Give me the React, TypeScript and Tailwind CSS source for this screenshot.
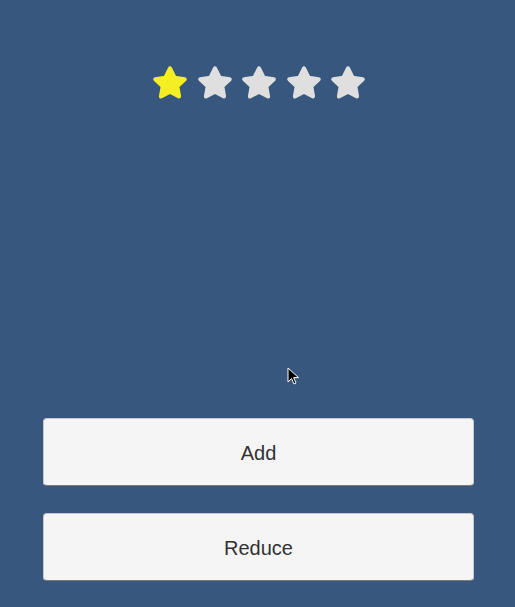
import React from "react";

function Star({ filled }: { filled: boolean }) {
  const color = filled ? "#f4ee23" : "#dfdfdf";
  return (
    <svg width="40" height="38" viewBox="0 0 24 24" className="block">
      <polygon
        points="12,2.8 14.9,8.7 21.3,9.6 16.6,14.1 17.7,20.5 12,17.5 6.3,20.5 7.4,14.1 2.7,9.6 9.1,8.7"
        fill={color}
        stroke={color}
        strokeWidth="2.6"
        strokeLinejoin="round"
      />
    </svg>
  );
}

export default function App() {
  const rating = 1;

  return (
    <div
      className="relative flex flex-col h-[607px] w-full bg-[#38577f] overflow-hidden"
      style={{ fontFamily: '"Liberation Sans", Arial, sans-serif' }}
    >
      <div className="flex justify-center gap-[4.5px] pt-[64px] pl-[3px]">
        {[0, 1, 2, 3, 4].map((i) => (
          <Star key={i} filled={i < rating} />
        ))}
      </div>

      <div className="mt-auto flex flex-col gap-[27px] pl-[43px] pr-[41px] pb-[26px]">
        <button className="h-[68px] w-full rounded-[4px] bg-[#f5f5f5] border border-[#c8c8c8] border-b-[#7a7a7a] pt-[2px] text-[20px] text-[#323232]">
          Add
        </button>
        <button className="h-[68px] w-full rounded-[4px] bg-[#f5f5f5] border border-[#c8c8c8] border-b-[#7a7a7a] pt-[2px] text-[20px] text-[#323232]">
          Reduce
        </button>
      </div>

      {/* mouse pointer */}
      <svg
        className="absolute left-[287px] top-[367px]"
        width="13"
        height="19"
        viewBox="0 0 13 19"
      >
        <path
          d="M1 1 L1 15 L4.5 11.5 L7 17 L9 16 L6.6 10.6 L11.5 10.6 Z"
          fill="#000"
          stroke="#fff"
          strokeWidth="1"
          strokeLinejoin="round"
        />
      </svg>
    </div>
  );
}
